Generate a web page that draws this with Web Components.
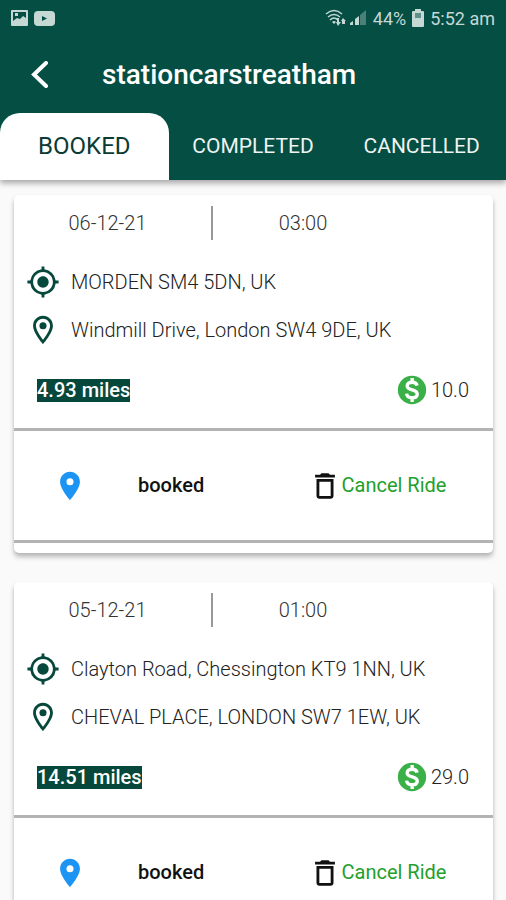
<!DOCTYPE html>
<html lang="en">
<head>
    <meta charset="UTF-8">
    <meta name="viewport" content="width=device-width, initial-scale=1.0">
    <title>stationcarstreatham</title>
    <style>
        body {
            margin: 0;
            font-family: Roboto, "Liberation Sans", sans-serif;
            background: #fafafa;
            color: #333333;
        }
    </style>
</head>
<body>
    <ride-app></ride-app>

    <script>
        const icons = {
            target: `<path d="M12 8c-2.21 0-4 1.79-4 4s1.79 4 4 4 4-1.79 4-4-1.79-4-4-4zm8.94 3A8.994 8.994 0 0 0 13 3.06V1h-2v2.06A8.994 8.994 0 0 0 3.06 11H1v2h2.06A8.994 8.994 0 0 0 11 20.94V23h2v-2.06A8.994 8.994 0 0 0 20.94 13H23v-2h-2.06zM12 19c-3.87 0-7-3.13-7-7s3.13-7 7-7 7 3.13 7 7-3.13 7-7 7z"/>`,
            place: `<path d="M12 2C8.13 2 5 5.13 5 9c0 5.25 7 13 7 13s7-7.75 7-13c0-3.87-3.13-7-7-7zM7 9c0-2.76 2.24-5 5-5s5 2.24 5 5c0 2.88-2.88 7.19-5 9.88C9.92 16.21 7 11.85 7 9z"/><circle cx="12" cy="9" r="2.5"/>`,
            pin: `<path d="M12 2C8.13 2 5 5.13 5 9c0 5.25 7 13 7 13s7-7.75 7-13c0-3.87-3.13-7-7-7zm0 9.5a2.5 2.5 0 0 1 0-5 2.5 2.5 0 0 1 0 5z"/>`,
            money: `<circle cx="12" cy="12" r="10"/><path fill="none" stroke="white" stroke-width="2.4" d="M15.6 8.9C15.3 7.300 13.900 6.500 12.100 6.500c-2 0-3.500 1-3.500 2.600 0 3.700 7.100 1.900 7.100 5.700 0 1.700-1.500 2.700-3.600 2.700-2.200 0-3.700-1-3.900-2.900M12.100 3.600v3M12.100 17.400v3"/>`,
            trash: `<path d="M6 19c0 1.100.9 2 2 2h8c1.100 0 2-.9 2-2V7H6v12zM8 9h8v10H8V9zm7.500-5l-1-1h-5l-1 1H5v2h14V4h-3.500z"/>`
        };

        class RideIcon extends HTMLElement {

            constructor() {
                super();
                this.attachShadow({ mode: "open" });
            }

            connectedCallback() {
                this.shadowRoot.innerHTML = `
                    <style>
                        :host {
                            display: block;
                            flex: none;
                            width: 34px;
                            height: 34px;
                        }
                        svg {
                            display: block;
                            width: 100%;
                            height: 100%;
                            fill: currentColor;
                        }
                    </style>
                    <svg viewBox="0 0 24 24" aria-hidden="true">${icons[this.getAttribute("name")]}</svg>
                `
            }
        }

        class StatusBar extends HTMLElement {

            constructor() {
                super();
                this.attachShadow({ mode: "open" });
                this.render()
            }

            render() {
                this.shadowRoot.innerHTML = `
                    <style>
                        :host {
                            display: flex;
                            justify-content: space-between;
                            align-items: center;
                            height: 36px;
                            padding: 0 11px;
                            font-size: 18px;
                            color: #c5d8d4;
                        }
                        div {
                            display: flex;
                            align-items: center;
                            gap: 6px;
                        }
                        svg {
                            display: block;
                        }
                    </style>
                    <div>
                        <svg width="17" height="16" viewBox="0 0 17 16" aria-hidden="true">
                            <path fill="currentColor" fill-rule="evenodd" d="M1 0h15a1 1 0 0 1 1 1v14a1 1 0 0 1-1 1H1a1 1 0 0 1-1-1V1a1 1 0 0 1 1-1zM2 2v9l4-3 3 1 3-3 3 2V2zM4 3h3v3H4z"/>
                        </svg>
                        <svg width="21" height="16" viewBox="0 0 21 16" aria-hidden="true">
                            <rect width="21" height="15" y="1" rx="4" fill="currentColor"/>
                            <path d="M8 6l5 2.500-5 2.500z" fill="#044e44"/>
                        </svg>
                    </div>
                    <div>
                        <svg width="42" height="18" viewBox="0 0 42 18" aria-hidden="true">
                            <g fill="none" stroke="currentColor" stroke-width="1.5">
                                <path d="M1 5Q9-2 17 5"/>
                                <path d="M3 8q6-5 12 0"/>
                                <path d="M5 11q4-4 8 0"/>
                            </g>
                            <path fill="currentColor" d="M7 13q2-2 4 0l-2 2zM14 9v4h2l-3 4-2-4h1V9zM18 9l3 3h-1v3h-3v-3h-1z"/>
                            <path fill="currentColor" d="M25 16v-2l3-2v4zM30 16v-6l4-3v9z"/>
                            <path fill="#4b8078" d="M35 16V6l6-5v15z"/>
                        </svg>
                        <span>44%</span>
                        <svg width="12" height="18" viewBox="0 0 12 18" aria-hidden="true">
                            <path fill="currentColor" d="M3 0h6v2h2a1 1 0 0 1 1 1v14a1 1 0 0 1-1 1H1a1 1 0 0 1-1-1V3a1 1 0 0 1 1-1h2z"/>
                            <path fill="#5f918a" d="M3 4h6v5H3z"/>
                        </svg>
                        <span>5:52 am</span>
                    </div>
                `
            }
        }

        class RideTabs extends HTMLElement {

            constructor() {
                super();
                this.attachShadow({ mode: "open" });
                this.render()
                this.tabLogic()
            }

            tabLogic() {
                const tabs = this.shadowRoot.querySelectorAll("button");
                tabs.forEach(tab => {
                    tab.addEventListener("click", function () {
                        tabs.forEach(t => t.setAttribute("aria-selected", t === tab))
                    })
                })
            }

            render() {
                this.shadowRoot.innerHTML = `
                    <style>
                        :host {
                            display: block;
                        }
                        div {
                            display: grid;
                            grid-template-columns: repeat(3, 1fr);
                        }
                        button {
                            height: 67px;
                            padding: 0 0 2px;
                            border: none;
                            border-radius: 20px 20px 0 0;
                            background: transparent;
                            color: #eef4f2;
                            font-family: inherit;
                            font-size: 21px;
                            font-weight: 400;
                            cursor: pointer;
                        }
                        button[aria-selected="true"] {
                            background: white;
                            color: #0b3b33;
                            font-size: 24px;
                        }
                    </style>
                    <div role="tablist">
                        <button role="tab" aria-selected="true">BOOKED</button>
                        <button role="tab" aria-selected="false">COMPLETED</button>
                        <button role="tab" aria-selected="false">CANCELLED</button>
                    </div>
                `
            }
        }

        class RideHeader extends HTMLElement {

            constructor() {
                super();
                this.attachShadow({ mode: "open" });
                this.render()
            }

            render() {
                this.shadowRoot.innerHTML = `
                    <style>
                        :host {
                            display: block;
                            flex: none;
                            position: relative;
                            z-index: 1;
                            background: #044e44;
                            box-shadow: 0 3px 6px rgba(0, 0, 0, .35);
                        }
                        .bar {
                            display: flex;
                            align-items: center;
                            height: 77px;
                            padding: 0 22px;
                            gap: 44px;
                        }
                        button {
                            display: flex;
                            justify-content: center;
                            align-items: center;
                            width: 36px;
                            height: 48px;
                            padding: 0;
                            border: none;
                            background: transparent;
                            color: white;
                            cursor: pointer;
                        }
                        h1 {
                            margin: 0;
                            font-size: 28px;
                            font-weight: 500;
                            color: white;
                        }
                    </style>
                    <status-bar></status-bar>
                    <div class="bar">
                        <button aria-label="Back">
                            <svg width="18" height="28" viewBox="0 0 18 28" fill="none" aria-hidden="true">
                                <path d="M15 2L3 13.500L15 25" stroke="currentColor" stroke-width="4" stroke-linecap="round"/>
                            </svg>
                        </button>
                        <h1><slot></slot></h1>
                    </div>
                    <ride-tabs></ride-tabs>
                `
            }
        }

        class RideCard extends HTMLElement {

            constructor() {
                super();
                this.attachShadow({ mode: "open" });
                this.render()
            }

            render() {
                this.shadowRoot.innerHTML = `
                    <style>
                        :host {
                            display: block;
                            border-radius: 5px;
                            background: white;
                            box-shadow: 0 4px 5px rgba(0, 0, 0, .25), 0 1px 3px rgba(0, 0, 0, .06);
                            font-size: 20px;
                            font-weight: 300;
                            line-height: 23px;
                        }
                        .when {
                            display: grid;
                            grid-template-columns: 187fr 22fr 160fr 110fr;
                            align-items: center;
                            justify-items: center;
                            height: 56px;
                        }
                        .line {
                            width: 2px;
                            height: 34px;
                            background: #999999;
                        }
                        .stops {
                            padding: 7px 12px 0;
                        }
                        .stop {
                            display: flex;
                            align-items: center;
                            gap: 11px;
                            min-height: 48px;
                            color: #222222;
                        }
                        .stop ride-icon {
                            color: #06483c;
                        }
                        .fare {
                            display: flex;
                            justify-content: space-between;
                            align-items: center;
                            height: 72px;
                            padding: 0 24px 2px 23px;
                            border-bottom: 3px solid #b3b3b3;
                        }
                        .miles {
                            background: #06483c;
                            color: white;
                            font-weight: 500;
                        }
                        .price {
                            display: flex;
                            align-items: center;
                            gap: 2px;
                            color: #222222;
                        }
                        .price ride-icon {
                            color: #3bb048;
                        }
                        .actions {
                            display: grid;
                            grid-template-columns: 112fr 135fr 232fr;
                            align-items: center;
                            height: 109px;
                            margin-bottom: 10px;
                            border-bottom: 3px solid #b3b3b3;
                        }
                        .actions ride-icon, button {
                            justify-self: center;
                        }
                        .map {
                            color: #1c94f4;
                        }
                        .state {
                            padding-left: 12px;
                            color: #111111;
                            font-weight: 500;
                        }
                        button {
                            display: flex;
                            align-items: center;
                            padding: 0;
                            border: none;
                            background: transparent;
                            color: #23a02b;
                            font: inherit;
                            font-weight: 400;
                            cursor: pointer;
                        }
                        button ride-icon {
                            color: #111111;
                        }
                    </style>
                    <div class="when">
                        <slot name="date"></slot>
                        <div class="line"></div>
                        <slot name="time"></slot>
                    </div>
                    <div class="stops">
                        <div class="stop"><ride-icon name="target"></ride-icon><slot name="from"></slot></div>
                        <div class="stop"><ride-icon name="place"></ride-icon><slot name="to"></slot></div>
                    </div>
                    <div class="fare">
                        <span class="miles"><slot name="miles"></slot></span>
                        <span class="price"><ride-icon name="money"></ride-icon><slot name="price"></slot></span>
                    </div>
                    <div class="actions">
                        <ride-icon class="map" name="pin"></ride-icon>
                        <span class="state"><slot name="state"></slot></span>
                        <button><ride-icon name="trash"></ride-icon>Cancel Ride</button>
                    </div>
                `
            }
        }

        class RideApp extends HTMLElement {

            constructor() {
                super();
                this.attachShadow({ mode: "open" });
                this.render()
            }

            render() {
                const rides = [
                    {date: "06-12-21", time: "03:00", from: "MORDEN SM4 5DN, UK", to: "Windmill Drive, London SW4 9DE, UK", miles: "4.93 miles", price: "10.0", state: "booked"},
                    {date: "05-12-21", time: "01:00", from: "Clayton Road, Chessington KT9 1NN, UK", to: "CHEVAL PLACE, LONDON SW7 1EW, UK", miles: "14.51 miles", price: "29.0", state: "booked"}
                ];

                this.shadowRoot.innerHTML = `
                    <style>
                        :host {
                            display: flex;
                            flex-direction: column;
                            height: 100vh;
                        }
                        main {
                            display: flex;
                            flex-direction: column;
                            flex: 1;
                            gap: 29px;
                            min-height: 0;
                            overflow-y: auto;
                            scrollbar-width: none;
                            padding: 15px 13px 15px 14px;
                        }
                        ride-card {
                            flex: none;
                        }
                    </style>
                    <ride-header>stationcarstreatham</ride-header>
                    <main>
                        ${rides.map(ride => `
                            <ride-card>
                                ${Object.keys(ride).map(key => `<span slot="${key}">${ride[key]}</span>`).join("")}
                            </ride-card>
                        `).join("")}
                    </main>
                `
            }
        }

        customElements.define("ride-icon", RideIcon);
        customElements.define("status-bar", StatusBar);
        customElements.define("ride-tabs", RideTabs);
        customElements.define("ride-header", RideHeader);
        customElements.define("ride-card", RideCard);
        customElements.define("ride-app", RideApp);
    </script>
</body>
</html>
